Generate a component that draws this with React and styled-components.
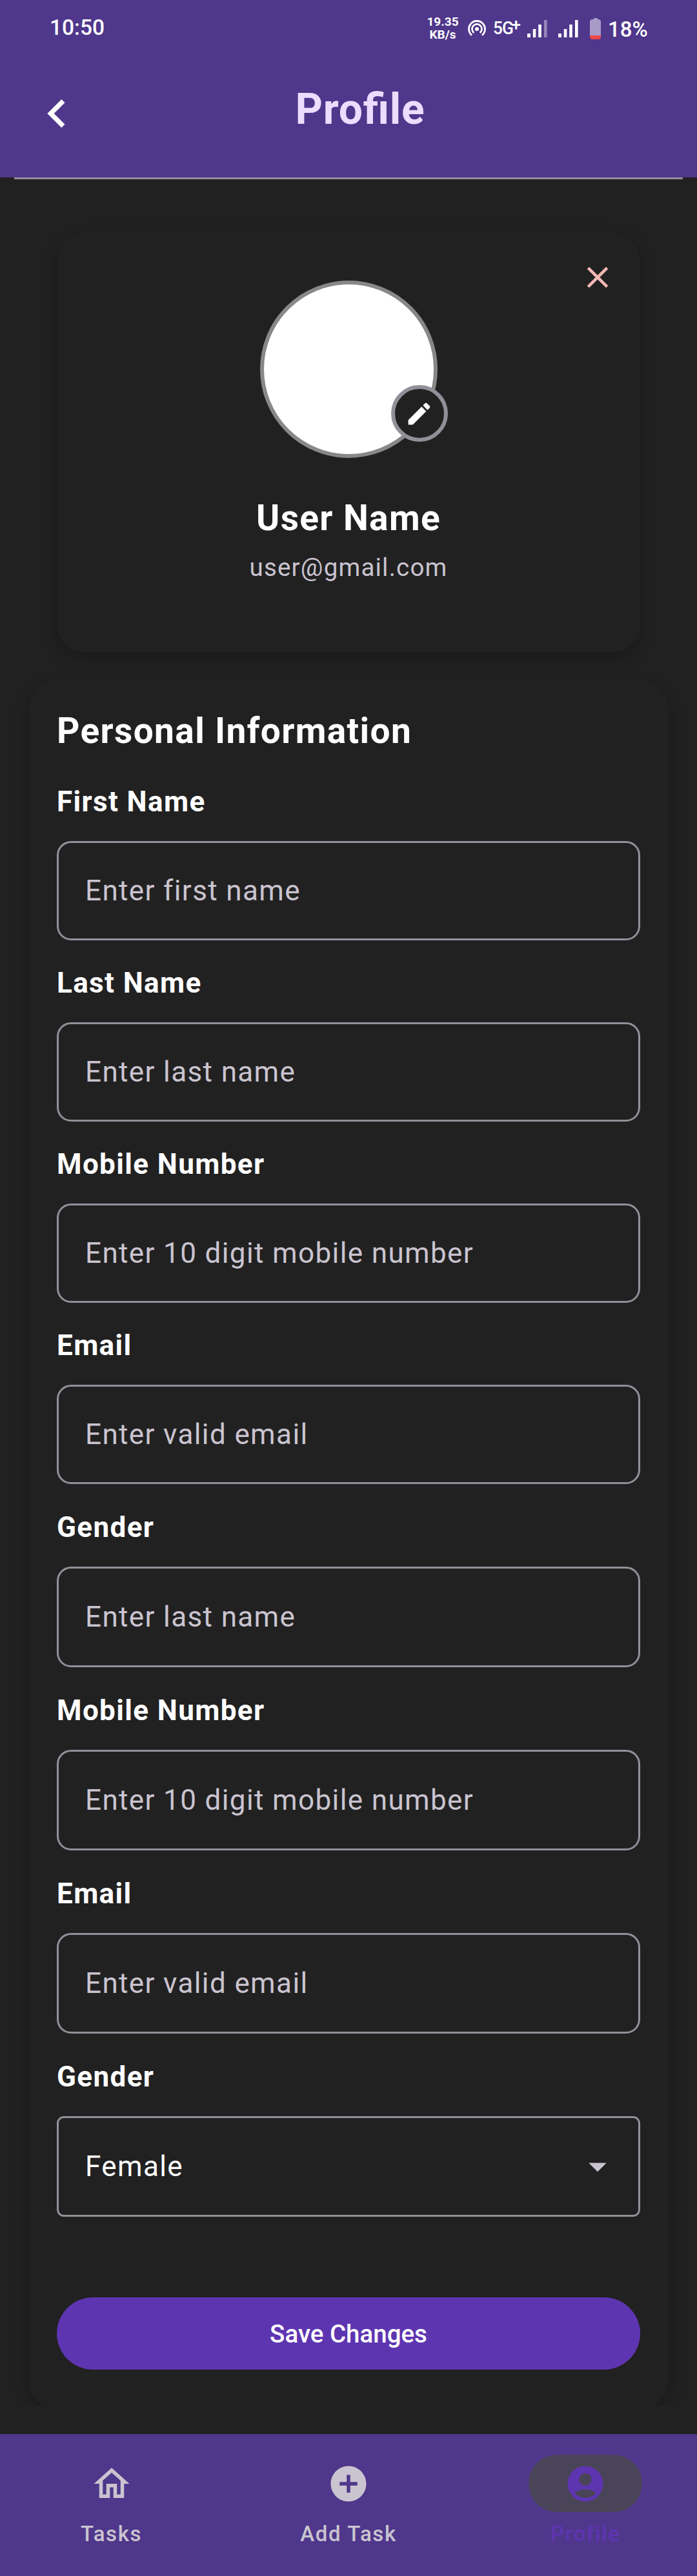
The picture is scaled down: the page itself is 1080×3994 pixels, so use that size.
import React from "react";
import styled, { createGlobalStyle, css } from "styled-components";
import {
  MdAddCircle,
  MdArrowDropDown,
  MdClose,
  MdEdit,
  MdKeyboardArrowLeft,
  MdOutlineHome,
} from "react-icons/md";

const color = {
  surface: "#212121",
  bar: "#4f378b",
  accent: "#5e35b1",
  outline: "#938f99",
  muted: "#cac4d0",
  title: "#eaddff",
  danger: "#f2b8b5",
  pill: "#4a4458",
};

const GlobalStyle = createGlobalStyle`
  *, *::before, *::after { box-sizing: border-box; }
  body {
    margin: 0;
    background: ${color.surface};
    color: #fff;
    font-family: Roboto, sans-serif;
  }
  button { font: inherit; border: 0; padding: 0; background: none; color: inherit; }
  svg { display: block; flex-shrink: 0; }
`;

const Screen = styled.div`
  display: flex;
  flex-direction: column;
  width: 1080px;
  height: 3994px;
  background: ${color.surface};
`;

/* ---------- top bar ---------- */

const TopBar = styled.header`
  height: 275px;
  background: ${color.bar};
`;

const StatusBar = styled.div`
  display: flex;
  align-items: center;
  height: 88px;
  padding: 0 76px 0 77px;
`;

const Clock = styled.span`
  margin: 0 auto 2px 0;
  font-size: 33.5px;
  line-height: 40px;
  font-weight: 500;
`;

const StatusItems = styled.div`
  display: flex;
  align-items: center;
  width: 343px;
`;

const NetSpeed = styled.div`
  width: 50px;
  margin-right: 13.5px;
  font-size: 19px;
  line-height: 20.5px;
  font-weight: 700;
  text-align: center;
`;

const NetworkType = styled.div`
  display: flex;
  width: 53px;
  margin-left: 11px;
  font-weight: 500;
`;

const NetworkLabel = styled.span`
  width: 29px;
  font-size: 28.5px;
  line-height: 34px;
  transform: scaleX(0.92);
  transform-origin: left;
  letter-spacing: -1px;
`;

const NetworkPlus = styled.span`
  font-size: 26px;
  line-height: 22px;
`;

const Battery = styled.div`
  display: flex;
  flex-direction: column;
  align-items: center;
  width: 17px;
  margin: 0 11px 0 18px;
`;

const BatteryCap = styled.div`
  width: 6px;
  height: 2px;
  background: #a99bc8;
`;

const BatteryBody = styled.div`
  width: 17px;
  height: 31px;
  border-radius: 4px;
  background: linear-gradient(#a99bc8 25px, #eb4747 25px);
`;

const BatteryLevel = styled.span`
  margin-top: 3px;
  font-size: 33px;
  line-height: 40px;
  font-weight: 500;
`;

const TitleRow = styled.div`
  display: flex;
  align-items: flex-start;
  padding: 43px 96px 0 44px;
`;

const BackButton = styled.button`
  margin-top: 1px;
  font-size: 88px;
`;

const PageTitle = styled.h1`
  flex: 1;
  margin: 0;
  font-size: 66px;
  line-height: 78px;
  font-weight: 700;
  letter-spacing: 0.8px;
  font-feature-settings: "liga" 1;
  text-align: center;
  color: ${color.title};
`;

const Divider = styled.hr`
  width: 1036px;
  height: 3px;
  margin: 0 auto;
  border: 0;
  background: ${color.outline};
`;

/* ---------- cards ---------- */

const card = css`
  background: ${color.surface};
  border-radius: 44px;
  box-shadow: 0 8px 26px rgba(0, 0, 0, 0.24);
`;

const ProfileCard = styled.section`
  ${card}
  position: relative;
  display: flex;
  flex-direction: column;
  align-items: center;
  height: 651px;
  margin: 83px 88px 0;
  padding-top: 74px;
`;

const CloseButton = styled.button`
  position: absolute;
  top: 41px;
  right: 38px;
  font-size: 56px;
  color: ${color.danger};
`;

const Avatar = styled.div`
  position: relative;
  width: 275px;
  height: 275px;
  border: 6px solid #888;
  border-radius: 50%;
  background: #fff;
`;

const EditBadge = styled.button`
  position: absolute;
  top: 156px;
  left: 197px;
  display: grid;
  place-items: center;
  width: 88px;
  height: 88px;
  border: 6px solid ${color.outline};
  border-radius: 50%;
  background: ${color.surface};
  font-size: 45px;
`;

const UserName = styled.h2`
  margin: 61px 0 0;
  font-size: 55px;
  line-height: 64px;
  font-weight: 700;
  letter-spacing: 1.375px;
`;

const UserEmail = styled.p`
  margin: 22px 0 0;
  font-size: 38.5px;
  line-height: 46px;
  letter-spacing: 1.2px;
  color: ${color.muted};
`;

const FormClip = styled.main`
  height: 2718px;
  padding: 43px 44px 0;
  overflow: hidden;
`;

const FormCard = styled.form`
  ${card}
  height: 2680px;
  padding: 46px 44px 0;
`;

const SectionTitle = styled.h2`
  margin: 0 0 52px;
  font-size: 55px;
  line-height: 64px;
  font-weight: 700;
  letter-spacing: 1.375px;
`;

const Field = styled.div`
  margin-bottom: ${(p) => (p.$tall ? 41.2 : 40.15)}px;
`;

const FieldLabel = styled.div`
  margin-bottom: 35px;
  font-size: 44px;
  line-height: 52px;
  font-weight: 700;
  letter-spacing: 1.375px;
`;

const FieldBox = styled.div`
  display: flex;
  align-items: center;
  justify-content: space-between;
  height: ${(p) => (p.$tall ? 156 : 154)}px;
  padding: 0 ${(p) => (p.$select ? 30 : 41)}px 0 41px;
  border: 3px solid ${color.outline};
  border-radius: ${(p) => (p.$select ? 11 : 22)}px;
  font-size: 44px;
  line-height: 66px;
  letter-spacing: 1.375px;
  color: ${(p) => (p.$select ? "#fff" : color.muted)};
`;

const DropIcon = styled(MdArrowDropDown)`
  font-size: 66px;
  color: ${color.muted};
`;

const SaveButton = styled.button`
  display: block;
  width: 100%;
  height: 112px;
  margin-top: 125px;
  border-radius: 56px;
  background: ${color.accent};
  color: #fff;
  font-size: 38.5px;
  font-weight: 500;
`;

/* ---------- bottom navigation ---------- */

const BottomNav = styled.nav`
  display: flex;
  gap: 22px;
  height: 220px;
  margin-top: auto;
  padding-top: 32px;
  background: ${color.bar};
`;

const NavItem = styled.div`
  flex: 1;
  display: flex;
  flex-direction: column;
  align-items: center;
  gap: 12px;
  color: ${(p) => (p.$active ? color.accent : color.muted)};
`;

const NavPill = styled.div`
  display: grid;
  place-items: center;
  width: 176px;
  height: 89px;
  border-radius: 45px;
  background: ${(p) => (p.$active ? color.pill : "transparent")};
  font-size: 66px;
`;

const NavLabel = styled.span`
  font-size: 33px;
  line-height: 44px;
  font-weight: 500;
  letter-spacing: 1.65px;
`;

/* ---------- drawings ---------- */

const HotspotIcon = () => (
  <svg width="28" height="28" viewBox="-14 -15 28 28" fill="none" stroke="#fff" strokeWidth="2.8">
    <path d="M-8 9.6A12.5 12.5 0 1 1 8 9.6" />
    <path d="M-4.7 5.8A7.5 7.5 0 1 1 4.7 5.8" />
    <circle r="3" fill="#fff" stroke="none" />
  </svg>
);

const SignalIcon = ({ weak }) => (
  <svg width="31" height="27" viewBox="0 0 31 27" fill="#fff">
    <rect x="0" y="21" width="5" height="6" />
    <rect x="8.8" y="14" width="4.5" height="13" />
    <rect x="17.2" y="7" width="4.6" height="20" />
    <rect x="26" y="0" width="4.6" height="27" opacity={weak ? 0.4 : 1} />
  </svg>
);

const SignalGap = styled.div`
  width: 17.5px;
`;

const AccountIcon = () => (
  <svg width="66" height="66" viewBox="0 0 24 24" fill="currentColor">
    <path d="M12 2C6.48 2 2 6.48 2 12s4.48 10 10 10 10-4.48 10-10S17.52 2 12 2zm0 4c1.93 0 3.5 1.57 3.5 3.5S13.93 13 12 13s-3.5-1.57-3.5-3.5S10.07 6 12 6zm0 14c-2.03 0-4.43-.82-6.14-2.88C7.55 15.8 9.68 15 12 15s4.45.8 6.14 2.12C16.43 19.18 14.03 20 12 20z" />
  </svg>
);

const fields = [
  { label: "First Name", text: "Enter first name" },
  { label: "Last Name", text: "Enter last name" },
  { label: "Mobile Number", text: "Enter 10 digit mobile number" },
  { label: "Email", text: "Enter valid email" },
  { label: "Gender", text: "Enter last name", tall: true },
  { label: "Mobile Number", text: "Enter 10 digit mobile number", tall: true },
  { label: "Email", text: "Enter valid email", tall: true },
  { label: "Gender", text: "Female", tall: true, select: true },
];

const navItems = [
  { label: "Tasks", Icon: MdOutlineHome },
  { label: "Add Task", Icon: MdAddCircle },
  { label: "Profile", Icon: AccountIcon, active: true },
];

export default function App() {
  return (
    <Screen>
      <GlobalStyle />
      <TopBar>
        <StatusBar>
          <Clock>10:50</Clock>
          <StatusItems>
            <NetSpeed>
              19.35
              <br />
              KB/s
            </NetSpeed>
            <HotspotIcon />
            <NetworkType>
              <NetworkLabel>5G</NetworkLabel>
              <NetworkPlus>+</NetworkPlus>
            </NetworkType>
            <SignalIcon weak />
            <SignalGap />
            <SignalIcon />
            <Battery>
              <BatteryCap />
              <BatteryBody />
            </Battery>
            <BatteryLevel>18%</BatteryLevel>
          </StatusItems>
        </StatusBar>
        <TitleRow>
          <BackButton aria-label="Back">
            <MdKeyboardArrowLeft />
          </BackButton>
          <PageTitle>Profile</PageTitle>
        </TitleRow>
      </TopBar>
      <Divider />

      <ProfileCard>
        <CloseButton aria-label="Close">
          <MdClose />
        </CloseButton>
        <Avatar>
          <EditBadge aria-label="Edit">
            <MdEdit />
          </EditBadge>
        </Avatar>
        <UserName>User Name</UserName>
        <UserEmail>user@gmail.com</UserEmail>
      </ProfileCard>

      <FormClip>
        <FormCard>
          <SectionTitle>Personal Information</SectionTitle>
          {fields.map((f, i) => (
            <Field key={i} $tall={f.tall}>
              <FieldLabel>{f.label}</FieldLabel>
              <FieldBox $tall={f.tall} $select={f.select}>
                <span>{f.text}</span>
                {f.select && <DropIcon />}
              </FieldBox>
            </Field>
          ))}
          <SaveButton type="button">Save Changes</SaveButton>
        </FormCard>
      </FormClip>

      <BottomNav>
        {navItems.map(({ label, Icon, active }) => (
          <NavItem key={label} $active={active}>
            <NavPill $active={active}>
              <Icon />
            </NavPill>
            <NavLabel>{label}</NavLabel>
          </NavItem>
        ))}
      </BottomNav>
    </Screen>
  );
}
